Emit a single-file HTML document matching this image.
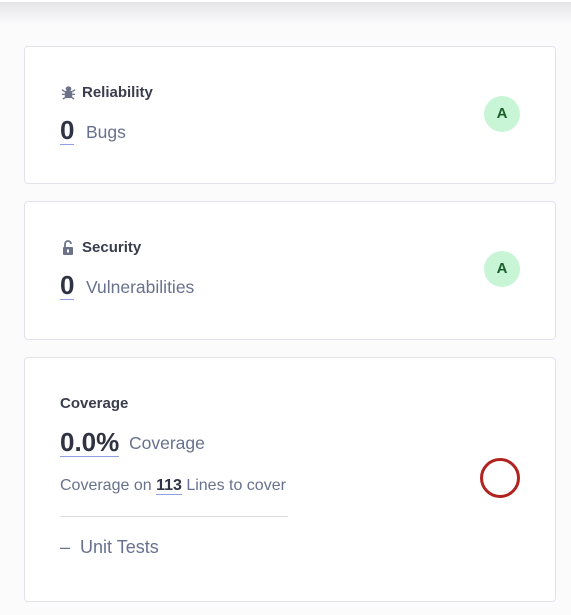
<!DOCTYPE html><html><head><style>
body{margin:0;width:571px;height:615px;background:#fbfbfc;font-family:"Liberation Sans",sans-serif;position:relative;overflow:hidden}
.top{position:absolute;left:0;top:0;width:571px;height:2px;background:#fff}
.sh{position:absolute;left:0;top:2px;width:571px;height:22px;background:linear-gradient(#e4e4e7,#fbfbfc)}
.card{position:absolute;left:24px;width:530px;background:#fff;border:1px solid #e1e3ec;border-radius:4px}
.t{position:absolute;left:35px;font-size:15px;font-weight:bold;color:#3a3d4d}
.big{position:absolute;left:35px;font-size:26px;font-weight:bold;color:#2f3343;border-bottom:1px solid #8f9fe6;line-height:28px}
.lab{position:absolute;font-size:17.5px;color:#68718d}
.a{position:absolute;left:459px;width:36px;height:36px;border-radius:50%;background:#c8f5d5;color:#1b5e2d;font-weight:bold;font-size:15px;text-align:center;line-height:36px}
</style></head><body>
<div class="top"></div><div class="sh"></div>
<div class="card" style="top:46px;height:136px">
<svg style="position:absolute;left:36px;top:38px" width="15" height="15" viewBox="0 0 16 16"><g fill="#6c7389"><ellipse cx="8" cy="4" rx="3" ry="2.5"/><rect x="4" y="6" width="8" height="8" rx="2"/><path d="M1 5l3 2M15 5l-3 2M1 10h3M12 10h3M2 15l3-2M14 15l-3-2" stroke="#6c7389" stroke-width="1.4"/></g></svg>
<div class="t" style="top:37px;left:57px">Reliability</div>
<div class="big" style="top:69px">0</div><div class="lab" style="left:61px;top:75px">Bugs</div>
<div class="a" style="top:49px">A</div></div>
<div class="card" style="top:201px;height:137px">
<svg style="position:absolute;left:37px;top:38px" width="12" height="15" viewBox="0 0 12 15"><path d="M3 7V4a3 3 0 0 1 6 0" stroke="#6c7389" stroke-width="1.8" fill="none"/><rect x="1" y="7" width="10" height="8" rx="1" fill="#6c7389"/><rect x="5" y="9.5" width="2" height="3" fill="#fff"/></svg>
<div class="t" style="top:37px;left:57px">Security</div>
<div class="big" style="top:69px">0</div><div class="lab" style="left:61px;top:75px">Vulnerabilities</div>
<div class="a" style="top:49px">A</div></div>
<div class="card" style="top:357px;height:243px">
<div class="t" style="top:37px">Coverage</div>
<div class="big" style="top:70px">0.0%</div><div class="lab" style="left:104px;top:75px">Coverage</div>
<div class="lab" style="left:35px;top:119px;font-size:16px">Coverage on <b style="color:#2f3343;border-bottom:1px solid #8f9fe6">113</b> Lines to cover</div>
<div style="position:absolute;left:35px;top:158px;width:228px;height:1px;background:#dcdde3"></div>
<div class="lab" style="left:35px;top:179px;font-size:18px">–&nbsp; Unit Tests</div>
<div style="position:absolute;left:455px;top:100px;width:34px;height:34px;border:3px solid #b1231f;border-radius:50%"></div>
</div>
</body></html>
